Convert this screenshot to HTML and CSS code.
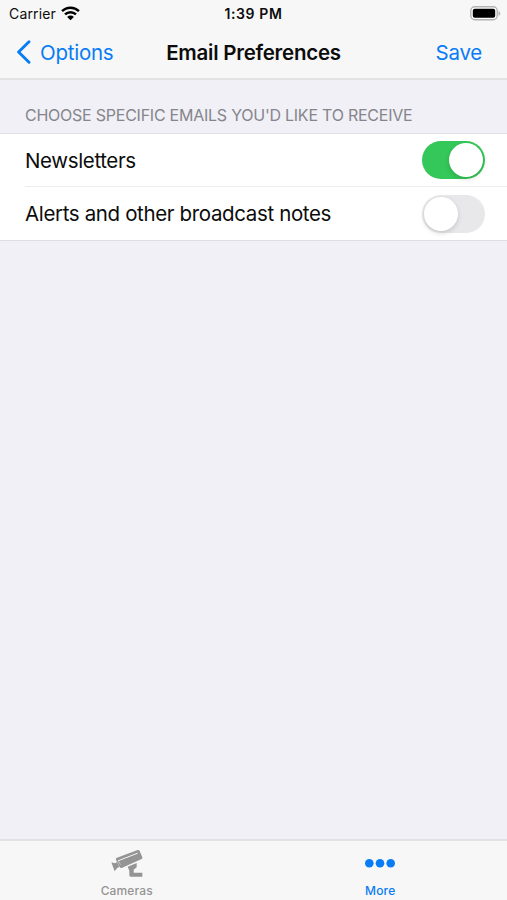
FILE: index.html
```
<!DOCTYPE html>
<html lang="en">
<head>
  <meta charset="utf-8">
  <title>Email Preferences</title>
  <link rel="stylesheet" href="styles.css">
</head>
<body>
  <div class="screen">
    <header class="header">
      <div class="status-bar">
        <div class="status-left">
          <span class="carrier">Carrier</span>
          <svg class="wifi" viewBox="0 0 18 14" width="19" height="15">
            <path d="M1 4.8a11.4 11.4 0 0 1 16 0M3.8 7.9a7.4 7.4 0 0 1 10.4 0" fill="none" stroke="#000" stroke-width="2.3"/>
            <path d="M5.8 10.3a4.6 4.6 0 0 1 6.4 0L9 13.5z"/>
          </svg>
        </div>
        <span class="time">1:39 PM</span>
        <div class="status-right">
          <svg class="battery" viewBox="0 0 31 15" width="31" height="15">
            <rect x=".8" y=".8" width="26.4" height="13" rx="4" fill="#fff" stroke="#b3b3b3" stroke-width="1.4"/>
            <rect x="2.8" y="2.8" width="22.4" height="9" rx="2"/>
            <path d="M28.5 5v4.8c2.3-.8 2.3-4 0-4.8z" fill="#b3b3b3"/>
          </svg>
        </div>
      </div>
      <nav class="nav-bar">
        <a class="back">
          <svg viewBox="0 0 16 24" width="16" height="24">
            <path d="M13 1.8L2.6 12 13 22.2" fill="none" stroke="currentColor" stroke-width="2.9" stroke-linecap="round" stroke-linejoin="round"/>
          </svg>
          <span>Options</span>
        </a>
        <h1 class="title">Email Preferences</h1>
        <a class="save">Save</a>
      </nav>
    </header>

    <main class="content">
      <h2 class="section-title">CHOOSE SPECIFIC EMAILS YOU'D LIKE TO RECEIVE</h2>
      <div class="list">
        <label class="row">
          <span class="row-label">Newsletters</span>
          <span class="switch on"></span>
        </label>
        <label class="row">
          <span class="row-label">Alerts and other broadcast notes</span>
          <span class="switch"></span>
        </label>
      </div>
    </main>

    <footer class="tab-bar">
      <a class="tab">
        <svg viewBox="66 42 96 84" width="32" height="28">
          <g fill="currentColor">
            <path d="M80 70l66-25q4-1 6 3l8 19q1 3-2 5l-60 27q-4 1-6-3l-11-21q-1-3 1-5z"/>
            <path d="M67 82l10 3 7-3 7 14-6 2-8 11z"/>
            <path d="M116 95l27-11v13l-9 7v9h26v12h-35q-4 0-4-4v-14z"/>
          </g>
          <path d="M88 77l57-22" stroke="#f7f7f7" stroke-width="3" stroke-linecap="round"/>
          <path d="M88 77l6 12" stroke="#f7f7f7" stroke-width="1.5"/>
        </svg>
        <span class="tab-label">Cameras</span>
      </a>
      <a class="tab active">
        <svg viewBox="0 0 32 28" width="32" height="28" fill="currentColor">
          <circle cx="5.3" cy="14.2" r="4.3"/>
          <circle cx="16" cy="14.2" r="4.3"/>
          <circle cx="26.7" cy="14.2" r="4.3"/>
        </svg>
        <span class="tab-label">More</span>
      </a>
    </footer>
  </div>
</body>
</html>
```

FILE: styles.css
```
:root {
  --blue: #087cf5;
  --green: #34c759;
  --bar-bg: #f7f7f7;
  --page-bg: #f0f0f6;
}

* {
  box-sizing: border-box;
}

body {
  margin: 0;
  font-family: Inter, "Liberation Sans", sans-serif;
  color: #0c0c0c;
}

.screen {
  display: flex;
  flex-direction: column;
  height: 900px;
  background: var(--page-bg);
}

.header {
  height: 80px;
  background: var(--bar-bg);
  border-bottom: 2px solid #e2e2e4;
}

/* Status bar */
.status-bar {
  display: grid;
  grid-template-columns: 1fr auto 1fr;
  align-items: center;
  height: 27px;
  padding: 0 6px 0 9px;
  font-size: 14px;
}

.status-left {
  display: flex;
  align-items: center;
  gap: 5px;
}

.carrier {
  letter-spacing: 0.15px;
}

.status-right {
  display: flex;
  justify-content: flex-end;
}

.time {
  margin-right: 3px;
  font-weight: 600;
  letter-spacing: 0.6px;
}

/* Navigation */
.nav-bar {
  display: grid;
  grid-template-columns: 1fr auto 1fr;
  align-items: center;
  height: 50px;
  padding: 0 25px 0 16px;
  font-size: 20.5px;
  letter-spacing: -0.25px;
}

.back {
  display: flex;
  align-items: center;
  gap: 8px;
}

.back,
.save {
  color: var(--blue);
}

.save {
  text-align: right;
}

.title {
  margin: 0 0 0 9px;
  font-size: 20.5px;
  font-weight: 600;
}

/* Settings list */
.content {
  flex: 1;
}

.section-title {
  height: 53px;
  margin: 0;
  padding: 25px 25px 0;
  font-size: 16px;
  line-height: 20px;
  font-weight: 400;
  letter-spacing: -0.24px;
  color: #85858b;
  white-space: nowrap;
}

.list {
  background: #fff;
  border-top: 1px solid #e2e2e5;
  border-bottom: 1px solid #dedee1;
}

.row {
  display: flex;
  align-items: center;
  justify-content: space-between;
  height: 52px;
  margin-left: 25px;
  padding-right: 22px;
  font-size: 20.5px;
  letter-spacing: -0.36px;
}

.row + .row {
  height: 54px;
  border-top: 1px solid #ececee;
}

.switch {
  display: flex;
  width: 63px;
  height: 38px;
  padding: 2px;
  border-radius: 19px;
  background: #e8e8ea;
}

.switch::before {
  content: "";
  width: 34px;
  height: 34px;
  border-radius: 50%;
  background: #fff;
  box-shadow: 0 2px 5px rgba(0, 0, 0, 0.15);
}

.switch.on {
  justify-content: flex-end;
  background: var(--green);
}

/* Tab bar */
.tab-bar {
  display: flex;
  height: 61px;
  background: var(--bar-bg);
  border-top: 2px solid #e2e2e4;
}

.tab {
  flex: 1;
  display: flex;
  flex-direction: column;
  align-items: center;
  padding-top: 8px;
  font-size: 12px;
  line-height: 15px;
  font-weight: 500;
  color: #949494;
}

.tab-label {
  margin-top: 6px;
  letter-spacing: 0.15px;
}

.tab.active {
  color: var(--blue);
}
```
